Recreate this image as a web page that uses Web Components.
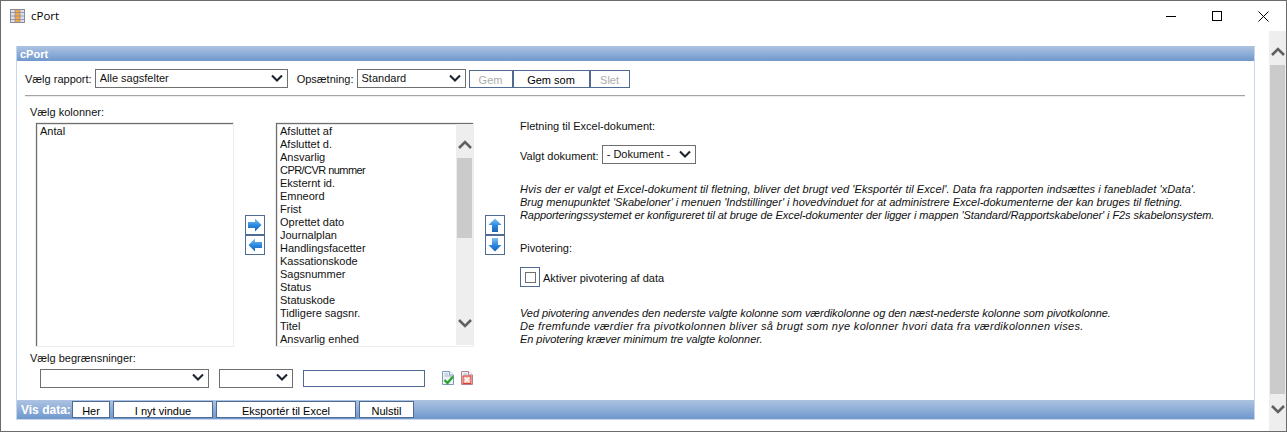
<!DOCTYPE html>
<html lang="da">
<head>
<meta charset="utf-8">
<title>cPort</title>
<style>
    html, body { margin: 0; padding: 0; background: #fff; }
    body { font: 11px "Liberation Sans", Arial, sans-serif; color: #111; overflow: hidden; }
</style>
</head>
<body>
<win-frame>
    <title-bar slot="title">cPort</title-bar>
    <report-panel heading="cPort">
        <div slot="top" style="display:contents">
            <span style="margin-right:3px">Vælg rapport:</span>
            <drop-down width="193">Alle sagsfelter</drop-down>
            <span style="margin:0 3px 0 9px">Opsætning:</span>
            <drop-down width="109">Standard</drop-down>
            <span style="width:3px"></span>
            <flat-button width="44" height="18" disabled>Gem</flat-button>
            <flat-button width="77" height="18">Gem som</flat-button>
            <flat-button width="40" height="18" disabled>Slet</flat-button>
        </div>

        <list-box slot="left"><div>Antal</div></list-box>
        <arrow-pair slot="move" kind="horizontal"></arrow-pair>
        <list-box slot="right" scroll>
            <div>Afsluttet af</div>
            <div>Afsluttet d.</div>
            <div>Ansvarlig</div>
            <div style="letter-spacing:-.55px">CPR/CVR nummer</div>
            <div>Eksternt id.</div>
            <div>Emneord</div>
            <div>Frist</div>
            <div>Oprettet dato</div>
            <div>Journalplan</div>
            <div>Handlingsfacetter</div>
            <div>Kassationskode</div>
            <div>Sagsnummer</div>
            <div>Status</div>
            <div>Statuskode</div>
            <div>Tidligere sagsnr.</div>
            <div>Titel</div>
            <div>Ansvarlig enhed</div>
        </list-box>
        <arrow-pair slot="order" kind="vertical"></arrow-pair>

        <merge-info slot="info"></merge-info>

        <div slot="limits" style="display:contents">
            <drop-down width="169" style="margin-right:10px"></drop-down>
            <drop-down width="74" style="margin-right:10px"></drop-down>
            <text-box width="122"></text-box>
            <page-icon kind="ok" style="margin-left:17px"></page-icon>
            <page-icon kind="clear" style="margin-left:7px"></page-icon>
        </div>

        <div slot="footer" style="display:contents">
            <flat-button width="38" height="17" style="margin-right:3px">Her</flat-button>
            <flat-button width="100" height="17" style="margin-right:3px">I nyt vindue</flat-button>
            <flat-button width="140" height="17" style="margin-right:3px">Eksportér til Excel</flat-button>
            <flat-button width="55" height="17">Nulstil</flat-button>
        </div>
    </report-panel>
</win-frame>

<script>
const CHEVRON_UP = '<path d="M2 10 L8 4 L14 10" fill="none" stroke-width="2.6"/>';
const CHEVRON_DOWN = '<path d="M2 5 L8 11 L14 5" fill="none" stroke-width="2.6"/>';
const SELECT_ARROW = '<path d="M3 5.5 L8 10.5 L13 5.5" fill="none" stroke-width="2.1"/>';

class WinFrame extends HTMLElement {
    constructor() {
        super();
        this.attachShadow({ mode: 'open' });
        this.shadowRoot.innerHTML = `
            <style>
                :host {
                    display: flex;
                    flex-direction: column;
                    box-sizing: border-box;
                    width: 1287px;
                    height: 432px;
                    border: 1px solid #6b6b6b;
                    background: #fff;
                }
                .body { flex: 1; display: flex; min-height: 0; }
                .main { flex: 1; padding: 15px 0 0 15px; min-width: 0; }
            </style>
            <slot name="title"></slot>
            <div class="body">
                <div class="main"><slot></slot></div>
                <scroll-bar thumb-top="34" thumb-height="329"></scroll-bar>
            </div>
        `;
    }
}

class TitleBar extends HTMLElement {
    constructor() {
        super();
        this.attachShadow({ mode: 'open' });
        this.shadowRoot.innerHTML = `
            <style>
                :host {
                    display: flex;
                    align-items: center;
                    height: 30px;
                    font: 11.5px "Open Sans", "Liberation Sans", sans-serif;
                    color: #000;
                }
                .icon { margin: 0 6px 1px 9px; width: 15px; height: 14px; }
                .text { flex: 1; margin-bottom: 1px; }
                .ctrl { width: 46px; height: 30px; display: flex; align-items: center; justify-content: center; }
                svg { display: block; }
            </style>
            <svg class="icon" viewBox="0 0 15 14" width="15" height="14">
                <rect x="0.5" y="0.5" width="14" height="13" fill="#dcdcf2" stroke="#8c8c96"/>
                <rect x="5" y="1" width="5" height="12" fill="#f7a73c"/>
                <path d="M5 1V13M10 1V13M1 3.5H14M1 7H14M1 10.5H14" stroke="#8c8c96" stroke-opacity=".75" fill="none"/>
            </svg>
            <span class="text"><slot></slot></span>
            <div class="ctrl"><svg width="10" height="10"><path d="M0 5.5H10" stroke="#000"/></svg></div>
            <div class="ctrl"><svg width="10" height="10"><rect x="0.5" y="0.5" width="9" height="9" fill="none" stroke="#000"/></svg></div>
            <div class="ctrl"><svg width="11" height="11"><path d="M0.5 0.5L10.5 10.5M10.5 0.5L0.5 10.5" stroke="#000"/></svg></div>
        `;
    }
}

class ReportPanel extends HTMLElement {
    constructor() {
        super();
        this.attachShadow({ mode: 'open' });
        this.shadowRoot.innerHTML = `
            <style>
                :host {
                    display: flex;
                    flex-direction: column;
                    box-sizing: border-box;
                    width: 1239px;
                    height: 374px;
                    border: solid #c9d6e9;
                    border-width: 0 1px 1px 1px;
                }
                .bar {
                    background: linear-gradient(#adc3e2, #6f98cd);
                    color: #fff;
                    font-weight: bold;
                    display: flex;
                    align-items: center;
                }
                .head { height: 15px; padding-left: 3px; }
                .top { display: flex; align-items: center; height: 19px; margin: 8px 9px 0 8px; white-space: nowrap; }
                hr { border: 0; border-top: 1px solid #a3a3a3; border-bottom: 1px solid #ececec; margin: 7px 9px 0 8px; height: 0; }
                .title-col { margin: 9px 0 3px 13px; height: 13px; line-height: 13px; }
                .cols { display: flex; height: 225px; margin-left: 18px; }
                .mid { flex: none; display: flex; align-items: center; justify-content: center; }
                .info { margin-left: 4px; flex: 1; }
                .limits { display: flex; align-items: center; height: 18px; margin: 4px 0 0 23px; }
                .foot { height: 19px; margin-top: auto; padding-left: 4px; }
                .foot span { width: 51px; flex: none; font-size: 12px; }
            </style>
            <div class="bar head">${this.getAttribute('heading') || ''}</div>
            <div class="top"><slot name="top"></slot></div>
            <hr>
            <div class="title-col">Vælg kolonner:</div>
            <div class="cols">
                <slot name="left"></slot>
                <div class="mid" style="width:41px"><slot name="move"></slot></div>
                <slot name="right"></slot>
                <div class="mid" style="width:42px"><slot name="order"></slot></div>
                <div class="info"><slot name="info"></slot></div>
            </div>
            <div class="title-col" style="margin-top:5px;margin-bottom:0">Vælg begrænsninger:</div>
            <div class="limits"><slot name="limits"></slot></div>
            <div class="bar foot"><span>Vis data:</span><slot name="footer"></slot></div>
        `;
    }
}

class DropDown extends HTMLElement {
    constructor() {
        super();
        this.attachShadow({ mode: 'open' });
        this.shadowRoot.innerHTML = `
            <style>
                :host {
                    display: flex;
                    align-items: center;
                    box-sizing: border-box;
                    height: 19px;
                    width: ${this.getAttribute('width')}px;
                    flex: none;
                    border: 1px solid #6f6f6f;
                    background: #fff;
                    padding: 0 4px;
                }
                .t { flex: 1; white-space: nowrap; overflow: hidden; margin-bottom: 1px; }
                svg { display: block; flex: none; stroke: #1d2430; }
            </style>
            <span class="t"><slot></slot></span>
            <svg width="16" height="16" viewBox="0 0 16 16" style="margin-bottom:2px;margin-right:-2px">${SELECT_ARROW}</svg>
        `;
    }
}

class TextBox extends HTMLElement {
    constructor() {
        super();
        this.attachShadow({ mode: 'open' });
        this.shadowRoot.innerHTML = `
            <style>
                :host {
                    display: block;
                    box-sizing: border-box;
                    flex: none;
                    width: ${this.getAttribute('width')}px;
                    height: 17px;
                    border: 1px solid #4f6b94;
                    background: #fff;
                }
            </style>
        `;
    }
}

class FlatButton extends HTMLElement {
    constructor() {
        super();
        this.attachShadow({ mode: 'open' });
        this.shadowRoot.innerHTML = `
            <style>
                :host {
                    display: flex;
                    align-items: center;
                    justify-content: center;
                    box-sizing: border-box;
                    flex: none;
                    width: ${this.getAttribute('width')}px;
                    height: ${this.getAttribute('height')}px;
                    border: 1px solid #4f6b94;
                    background: #fff;
                    color: ${this.hasAttribute('disabled') ? '#adadad' : '#000'};
                    cursor: pointer;
                    font-weight: normal;
                    padding-top: 3px;
                    overflow: hidden;
                    white-space: nowrap;
                }
            </style>
            <slot></slot>
        `;
    }
}

class ScrollBar extends HTMLElement {
    constructor() {
        super();
        this.attachShadow({ mode: 'open' });
        this.shadowRoot.innerHTML = `
            <style>
                :host {
                    display: block;
                    position: relative;
                    flex: none;
                    width: 17px;
                    background: #eee;
                }
                .thumb {
                    position: absolute;
                    left: 1px;
                    right: 1px;
                    top: ${this.getAttribute('thumb-top')}px;
                    height: ${this.getAttribute('thumb-height')}px;
                    background: #cbcbcb;
                }
                svg { position: absolute; left: 1px; stroke: #606060; }
                .up { top: 14px; }
                .down { bottom: 14px; }
            </style>
            <svg class="up" width="16" height="16" viewBox="0 0 16 16">${CHEVRON_UP}</svg>
            <div class="thumb"></div>
            <svg class="down" width="16" height="16" viewBox="0 0 16 16">${CHEVRON_DOWN}</svg>
        `;
    }
}

class ListBox extends HTMLElement {
    constructor() {
        super();
        this.attachShadow({ mode: 'open' });
        const bar = this.hasAttribute('scroll')
            ? '<scroll-bar thumb-top="34" thumb-height="80"></scroll-bar>' : '';
        this.shadowRoot.innerHTML = `
            <style>
                :host {
                    display: flex;
                    box-sizing: border-box;
                    flex: none;
                    width: 199px;
                    height: 225px;
                    border: 1px solid #ececec;
                    background: #fff;
                }
                .in {
                    flex: 1;
                    display: flex;
                    min-width: 0;
                    border: solid #6e6e6e;
                    border-width: 1px 0 0 1px;
                    box-shadow: inset 1px 1px 0 #e4e4e4;
                }
                .items { flex: 1; padding: 1px 0 0 3px; line-height: 13px; overflow: hidden; white-space: nowrap; }
                scroll-bar { margin-bottom: 1px; }
            </style>
            <div class="in">
                <div class="items"><slot></slot></div>
                ${bar}
            </div>
        `;
    }
}

class ArrowPair extends HTMLElement {
    constructor() {
        super();
        this.attachShadow({ mode: 'open' });
        const h = this.getAttribute('kind') === 'horizontal';
        const first = h ? 'M1 5H8V1.5L14.5 8L8 14.5V11H1Z' : 'M5 15V8H1.5L8 1.5L14.5 8H11V15Z';
        const second = h ? 'M15 5H8V1.5L1.5 8L8 14.5V11H15Z' : 'M5 1V8H1.5L8 14.5L14.5 8H11V1Z';
        const icon = (d, id) => `
            <div class="b">
                <svg width="16" height="16" viewBox="0 0 16 16">
                    <defs><linearGradient id="${id}" x1="0" y1="0" x2="0" y2="1">
                        <stop offset="0" stop-color="#7fc0f2"/><stop offset=".55" stop-color="#2a86de"/><stop offset="1" stop-color="#1c64b4"/>
                    </linearGradient></defs>
                    <path d="${d}" fill="url(#${id})"/>
                </svg>
            </div>`;
        this.shadowRoot.innerHTML = `
            <style>
                :host { display: flex; flex-direction: column; width: 20px; }
                .b {
                    box-sizing: border-box;
                    width: 20px;
                    height: 20px;
                    border: 1px solid #4f6b94;
                    background: #fff;
                    display: flex;
                    align-items: center;
                    justify-content: center;
                }
                svg { display: block; }
            </style>
            ${icon(first, 'a1')}${icon(second, 'a2')}
        `;
    }
}

class PageIcon extends HTMLElement {
    constructor() {
        super();
        this.attachShadow({ mode: 'open' });
        const ok = this.getAttribute('kind') === 'ok';
        const mark = ok
            ? '<path d="M2.5 9L5.5 12L11 5.5" fill="none" stroke="#2fa32f" stroke-width="2.4"/>'
            : '<rect x="2" y="5" width="8" height="7.5" fill="#f6b9b2" stroke="#d8402f"/><path d="M4 6.8L8 10.8M8 6.8L4 10.8" stroke="#fff" stroke-width="1.4"/>';
        const stroke = ok ? '#7f99bb' : '#b7808a';
        this.shadowRoot.innerHTML = `
            <style>
                :host { display: block; flex: none; width: 12px; height: 14px; margin-top: -1px; }
                svg { display: block; }
            </style>
            <svg width="12" height="14" viewBox="0 0 12 14">
                <path d="M0.5 0.5H7.5L11.5 4V13.5H0.5Z" fill="#eef2f8" stroke="${stroke}"/>
                <path d="M7.5 0.5V4H11.5" fill="#fff" stroke="${stroke}"/>
                <path d="M2.5 3H6M2.5 5H9" stroke="#a9b6c8"/>
                ${mark}
            </svg>
        `;
    }
}

class MergeInfo extends HTMLElement {
    constructor() {
        super();
        this.attachShadow({ mode: 'open' });
        this.shadowRoot.innerHTML = `
            <style>
                :host { display: block; line-height: 13px; white-space: nowrap; }
                p { margin: 0; }
                .note { font-style: italic; }
                .row { display: flex; align-items: center; }
                .row span { padding-top: 3px; }
                .sel { margin-left: 3px; }
                .check {
                    box-sizing: border-box;
                    width: 20px;
                    height: 20px;
                    border: 1px solid #4f6b94;
                    display: flex;
                    align-items: center;
                    justify-content: center;
                    margin-right: 3px;
                }
                .check i { display: block; box-sizing: border-box; width: 11px; height: 11px; border: 1px solid #6f6f6f; }
            </style>
            <p style="margin-top:-2px">Fletning til Excel-dokument:</p>
            <div class="row" style="margin-top:12px">
                <span>Valgt dokument:</span>
                <drop-down class="sel" width="94">- Dokument -</drop-down>
            </div>
            <p class="note" style="margin-top:19px;letter-spacing:.09px">Hvis der er valgt et Excel-dokument til fletning, bliver det brugt ved 'Eksportér til Excel'. Data fra rapporten indsættes i fanebladet 'xData'.</p>
            <p class="note">Brug menupunktet 'Skabeloner' i menuen 'Indstillinger' i hovedvinduet for at administrere Excel-dokumenterne der kan bruges til fletning.</p>
            <p class="note" style="letter-spacing:-.08px">Rapporteringssystemet er konfigureret til at bruge de Excel-dokumenter der ligger i mappen 'Standard/Rapportskabeloner' i F2s skabelonsystem.</p>
            <p style="margin-top:20px">Pivotering:</p>
            <div class="row" style="margin-top:12px">
                <div class="check"><i></i></div>
                <span>Aktiver pivotering af data</span>
            </div>
            <p class="note" style="margin-top:20px;letter-spacing:-.07px">Ved pivotering anvendes den nederste valgte kolonne som værdikolonne og den næst-nederste kolonne som pivotkolonne.</p>
            <p class="note" style="letter-spacing:.32px">De fremfunde værdier fra pivotkolonnen bliver så brugt som nye kolonner hvori data fra værdikolonnen vises.</p>
            <p class="note" style="letter-spacing:-.06px">En pivotering kræver minimum tre valgte kolonner.</p>
        `;
    }
}

customElements.define('scroll-bar', ScrollBar);
customElements.define('drop-down', DropDown);
customElements.define('text-box', TextBox);
customElements.define('flat-button', FlatButton);
customElements.define('list-box', ListBox);
customElements.define('arrow-pair', ArrowPair);
customElements.define('page-icon', PageIcon);
customElements.define('merge-info', MergeInfo);
customElements.define('title-bar', TitleBar);
customElements.define('report-panel', ReportPanel);
customElements.define('win-frame', WinFrame);
</script>
</body>
</html>
